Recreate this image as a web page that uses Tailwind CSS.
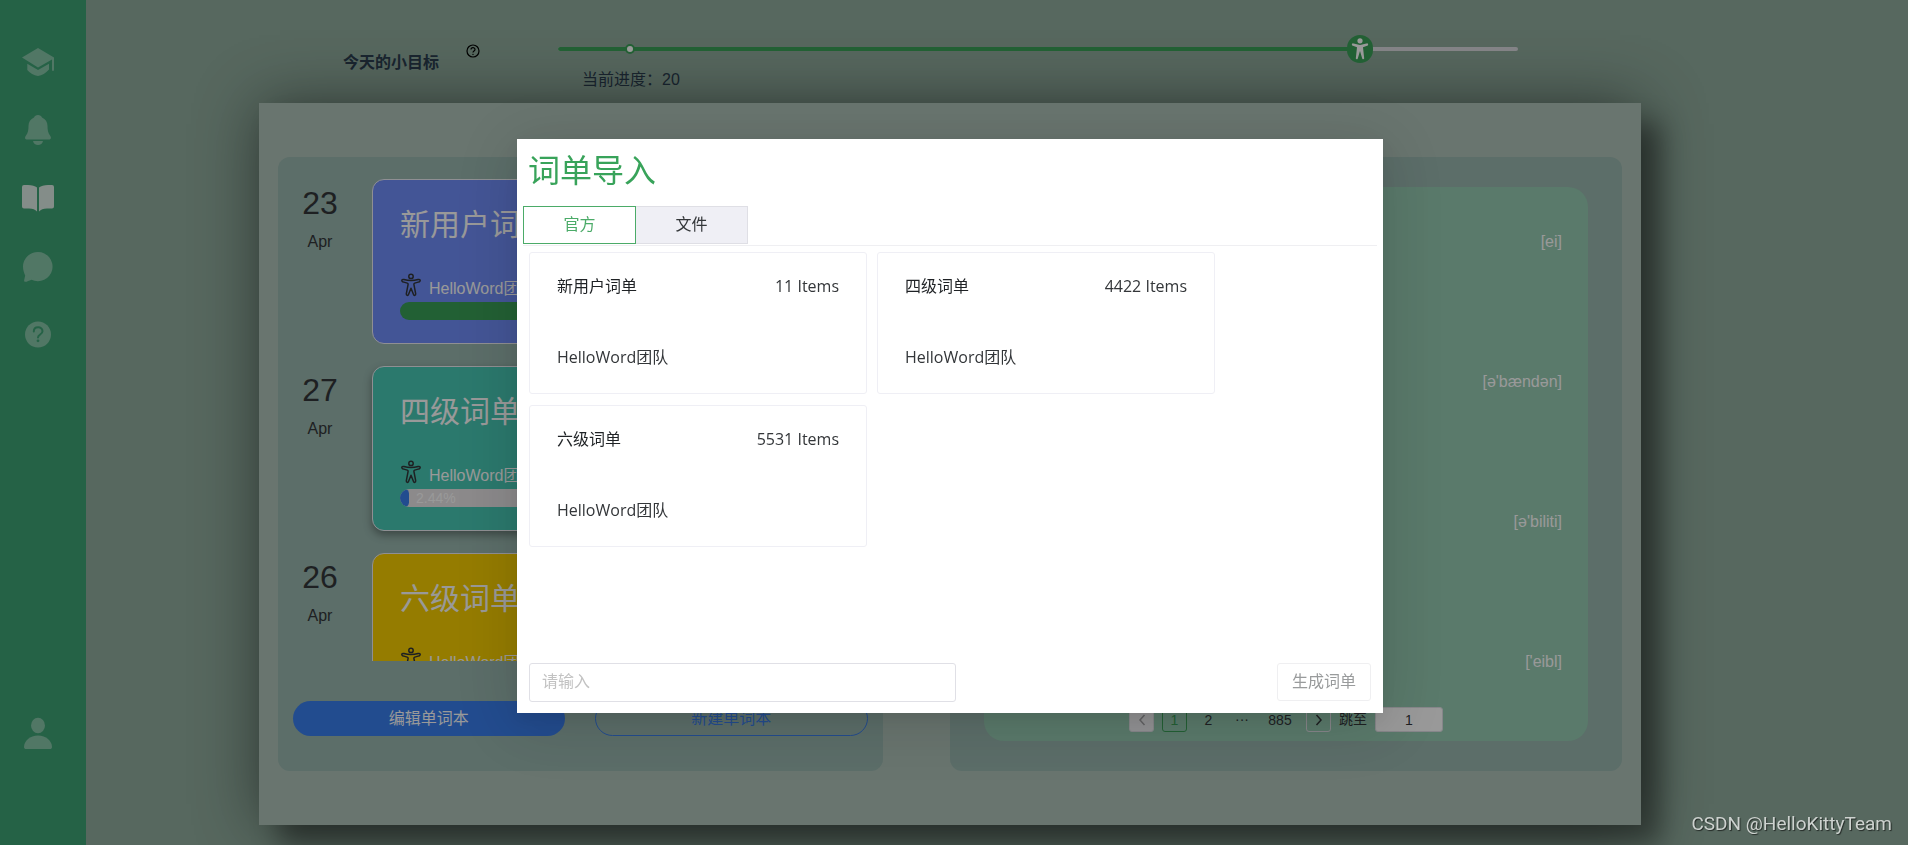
<!DOCTYPE html>
<html lang="zh-CN">
<head>
<meta charset="utf-8">
<meta name="viewport" content="width=device-width, initial-scale=1">
<title>HelloWord</title>
<script src="https://cdn.jsdelivr.net/npm/@tailwindcss/browser@4"></script>
</head>
<body class="h-screen overflow-hidden bg-[#91ad9e] text-base text-[#333639] font-['Liberation_Sans','Noto_Sans_CJK_SC',sans-serif]">
<svg class="hidden" aria-hidden="true">
  <symbol id="person" viewBox="0 0 22 24">
    <g fill="none" stroke="currentColor" stroke-width="1.5" stroke-linejoin="round" stroke-linecap="round">
      <circle cx="11" cy="3.4" r="2.2"/>
      <path d="M2.3 6.6C1.4 7.3 1.8 8.600 3 8.900L7.300 10.100C7.900 10.300 8.200 10.700 8.100 11.300L6.300 20.900C6.200 22.500 8 22.900 8.500 21.600L11 15.200L13.500 21.600C14 22.900 15.800 22.500 15.700 20.900L13.900 11.300C13.800 10.700 14.100 10.300 14.700 10.100L19 8.900C20.200 8.600 20.600 7.300 19.700 6.600C19.200 6.300 18.700 6.400 18.100 6.500C13.400 7.900 8.600 7.900 3.900 6.500C3.300 6.400 2.800 6.300 2.300 6.600Z"/>
    </g>
  </symbol>
</svg>

<div class="flex h-full">
  <nav class="flex w-[86px] shrink-0 flex-col bg-[#3fa375] pl-[18px] pt-[42px] text-[#87c6a9]">
    <div class="flex flex-col gap-7">
      <a href="#" aria-label="学习" class="block size-10"><svg viewBox="0 0 40 40" class="size-10" fill="currentColor"><path d="M20 6 36 15.500V27.500Q36 29 35 29T34 27.500V17.500L20 25.500 4 15.500Z"/><path d="M9.300 21.800 20 28 31 21.800V27.500Q26 33 20 34 13.500 33 9.300 28Z"/></svg></a>
      <a href="#" aria-label="通知" class="block size-10"><svg viewBox="0 0 40 40" class="size-10" fill="currentColor"><path d="M20 5C22 5 23.500 6 24 7.500 27.500 9 29.500 12 29.500 16 29.500 20 30 23 32 25.500 34 28 32.500 29.600 31 29.600H9C7.500 29.600 6 28 8 25.500 10 23 10.500 20 10.500 16 10.500 12 12.500 9 16 7.500 16.500 6 18 5 20 5ZM15 31H25C24.500 33.500 22.500 35 20 35S15.500 33.500 15 31Z"/></svg></a>
      <a href="#" aria-label="单词本" class="block size-10 text-[#ddebe4]"><svg viewBox="0 0 40 40" class="size-10" fill="currentColor"><path d="M6 7H10C14 7 17 8 19 9.500V33.500C17 31.500 15 30.500 11 30.500H6Q4 30.500 4 28.500V9Q4 7 6 7ZM34 7H30C26 7 23 8 21 9.500V33.500C23 31.500 25 30.500 29 30.500H34Q36 30.500 36 28.500V9Q36 7 34 7Z"/></svg></a>
      <a href="#" aria-label="消息" class="block size-10"><svg viewBox="0 0 40 40" class="size-10" fill="currentColor"><path d="M20 6A14.600 14.600 0 1 1 13.500 33.700C11 34.500 9 35.800 7.300 35.800 6 35.800 6 34.500 6.300 33.500L7.200 29.500C6 27 5 24 5 20.600A15 14.600 0 0 1 20 6Z"/></svg></a>
      <a href="#" aria-label="帮助" class="block size-10"><svg viewBox="0 0 40 40" class="size-10"><circle cx="20" cy="20.500" r="13" fill="currentColor"/><path d="M15.800 17.500C15.800 12 24.500 12 24.500 17.200 24.500 20.500 20 20.500 20 23.500" fill="none" stroke="#3fa375" stroke-width="2" stroke-linecap="round"/><circle cx="20" cy="26.800" r="1.400" fill="#3fa375"/></svg></a>
    </div>
    <a href="#" aria-label="用户" class="mb-[92px] mt-auto block size-10"><svg viewBox="0 0 40 40" class="size-10" fill="currentColor"><ellipse cx="20" cy="12.500" rx="7" ry="7.700"/><path d="M20 22.500C28 22.500 34 28 34 34 34 35.500 33 36 32 36H8C7 36 6 35.500 6 34 6 28 12 22.500 20 22.500Z"/></svg></a>
  </nav>

  <main class="flex min-w-0 flex-1 flex-col">
    <header class="flex h-[103px] shrink-0 items-start pl-[257px] pr-[390px] text-[#2c3e50]">
      <label for="goal" class="mt-[51px] w-24 font-bold leading-6">今天的小目标</label>
      <button aria-label="说明" class="ml-[27px] mt-[44px] text-black"><svg viewBox="0 0 14 14" class="block size-[14px]" fill="none" stroke="currentColor"><circle cx="7" cy="7" r="6" stroke-width="1.200"/><path d="M5 5.600C5 3 9 3 9 5.500 9 7 7 7 7 8.600" stroke-width="1.200"/><circle cx="7" cy="10.300" r=".4" fill="currentColor" stroke-width=".6"/></svg></button>
      <div class="ml-[78px] mt-[35px] flex-1">
        <div class="relative flex h-7 items-center">
          <div class="h-1 w-full overflow-hidden rounded-full bg-[#dbdbdf]"><div class="h-full bg-[#3aa057]" style="width:83.5%"></div></div>
          <span class="absolute size-[10px] -translate-x-1/2 rounded-full border-2 border-[#3aa057] bg-white" style="left:7.5%"></span>
          <span class="absolute flex h-7 w-[26px] -translate-x-1/2 items-center justify-center rounded-full bg-[#3aa057] text-white" style="left:83.5%"><svg viewBox="0 0 18 24" class="h-6 w-[18px]" fill="currentColor"><circle cx="9" cy="3.800" r="2.600"/><path d="M1.500 6.300 9 8 16.500 6.300Q17.800 7.500 16.800 8.600L12 10.300 13.200 21.500Q12.500 23 11.300 21.800L9 14 6.700 21.800Q5.500 23 4.800 21.500L6 10.300 1.200 8.600Q.2 7.500 1.500 6.300Z"/></svg></span>
          <input id="goal" type="range" min="0" max="24" value="20" class="absolute inset-0 w-full opacity-0">
        </div>
        <p class="mt-[5px] pl-6 leading-6">当前进度：20</p>
      </div>
    </header>

    <section class="mb-5 ml-[173px] mr-[267px] grid min-h-0 flex-1 grid-cols-[605fr_672fr] gap-[67px] bg-[#afc3b9] px-[19px] py-[54px] shadow-[20px_20px_25px_rgba(0,0,0,0.38),0_0_60px_rgba(0,0,0,0.45)]">
      <div class="flex min-h-0 flex-col rounded-xl bg-[#99b7af]">
        <div class="flex min-h-0 flex-1 flex-col gap-[22px] overflow-hidden pr-[22px] pt-[22px]">
          <article class="flex shrink-0 gap-[10px]">
            <div class="w-[84px] pt-1 text-center"><p class="text-[32px] leading-10">23</p><p class="mt-[7px] leading-6">Apr</p></div>
            <div class="flex-1 rounded-xl border border-[#efeff5] bg-[#718efa] px-[27px] pb-[23px] pt-[27px] text-white">
              <h2 class="text-[30px] leading-9">新用户词单</h2>
              <div class="mt-[30px] flex h-7 items-end gap-[7px]"><svg class="h-6 w-[22px] self-start text-[#333639]"><use href="#person"/></svg><span class="leading-6">HelloWord团队</span></div>
              <div class="mt-px h-[18px] rounded-full bg-[#3aa057]"></div>
            </div>
          </article>
          <article class="flex shrink-0 gap-[10px]">
            <div class="w-[84px] pt-1 text-center"><p class="text-[32px] leading-10">27</p><p class="mt-[7px] leading-6">Apr</p></div>
            <div class="flex-1 rounded-xl border border-[#efeff5] bg-[#48cab6] px-[27px] pb-[23px] pt-[27px] text-white shadow-[0_4px_8px_rgba(0,0,0,0.35)]">
              <h2 class="text-[30px] leading-9">四级词单</h2>
              <div class="mt-[30px] flex h-7 items-end gap-[7px]"><svg class="h-6 w-[22px] self-start text-[#333639]"><use href="#person"/></svg><span class="leading-6">HelloWord团队</span></div>
              <div class="mt-px flex h-[18px] overflow-hidden rounded-full bg-[#e9e6e8]"><div class="h-full rounded-full bg-[#3a7fee]" style="width:2.1%"></div><span class="pl-[7px] text-sm leading-[18px] text-white">2.44%</span></div>
            </div>
          </article>
          <article class="flex shrink-0 gap-[10px]">
            <div class="w-[84px] pt-1 text-center"><p class="text-[32px] leading-10">26</p><p class="mt-[7px] leading-6">Apr</p></div>
            <div class="flex-1 rounded-xl border border-[#efeff5] bg-[#f8cf00] px-[27px] pb-[23px] pt-[27px] text-white">
              <h2 class="text-[30px] leading-9">六级词单</h2>
              <div class="mt-[30px] flex h-7 items-end gap-[7px]"><svg class="h-6 w-[22px] self-start text-[#333639]"><use href="#person"/></svg><span class="leading-6">HelloWord团队</span></div>
              <div class="mt-px h-[18px] rounded-full bg-[#e9e6e8]"></div>
            </div>
          </article>
        </div>
        <div class="mb-[35px] mt-10 flex gap-[30px] px-[15px]">
          <button class="h-[35px] flex-1 rounded-full bg-[#3a7fee] text-white">编辑单词本</button>
          <button class="h-[35px] flex-1 rounded-full border border-[#3a7fee] text-[#3a7fee]">新建单词本</button>
        </div>
      </div>

      <div class="flex min-h-0 flex-col rounded-xl bg-[#99b7af] px-[34px] py-[30px]">
        <div class="flex min-h-0 flex-1 flex-col rounded-[20px] bg-[#96cbb2] pb-[9px]">
          <ul class="min-h-0 flex-1 overflow-hidden text-right leading-6 text-white">
            <li class="h-[140px] pr-[26px] pt-[43px]">[ei]</li>
            <li class="h-[140px] pr-[26px] pt-[43px]">[ə'bændən]</li>
            <li class="h-[140px] pr-[26px] pt-[43px]">[ə'biliti]</li>
            <li class="h-[140px] pr-[26px] pt-[43px]">['eibl]</li>
          </ul>
          <div class="flex h-[25px] items-stretch justify-center gap-2 text-sm">
            <button aria-label="上一页" disabled class="flex w-[25px] items-center justify-center rounded-[3px] border border-[#e0e0e6] bg-[#f5f5f8] text-[#a5a5a8]"><svg viewBox="0 0 8 12" class="h-3 w-2" fill="none" stroke="currentColor" stroke-width="1.500"><path d="M6.500 1 2 6l4.500 5"/></svg></button>
            <button class="w-[25px] rounded-[3px] border border-[#3aa057] text-[#3aa057]">1</button>
            <button class="w-[27px]">2</button>
            <span class="w-6 text-center leading-6">···</span>
            <button class="w-9">885</button>
            <button aria-label="下一页" class="flex w-[25px] items-center justify-center rounded-[3px] border border-[#e0e0e6]"><svg viewBox="0 0 8 12" class="h-3 w-2" fill="none" stroke="currentColor" stroke-width="1.500"><path d="M1.500 1 6 6l-4.500 5"/></svg></button>
            <label for="jump" class="leading-6">跳至</label>
            <input id="jump" value="1" class="w-[68px] rounded-[3px] border border-[#e0e0e6] bg-white text-center">
          </div>
        </div>
      </div>
    </section>
  </main>
</div>

<div class="fixed inset-0 flex items-start justify-center bg-black/40 pr-2 pt-[139px]">
  <div role="dialog" aria-labelledby="dialog-title" class="flex h-[574px] w-[866px] flex-col bg-white pb-[11px] pt-[9px] font-['Open_Sans','Noto_Sans_CJK_SC',sans-serif] shadow-[0_6px_16px_rgba(0,0,0,0.08),0_9px_60px_10px_rgba(0,0,0,0.12)]">
    <h1 id="dialog-title" class="px-[11px] text-[32px] leading-[44px] text-[#38a35a]">词单导入</h1>
    <div role="tablist" class="mx-1.5 mt-[14px] flex border-b border-[#efeff2] pb-px">
      <button role="tab" aria-selected="true" class="h-[38px] w-[113px] border border-[#4bab68] pb-0.5 text-[#4bab68]">官方</button>
      <button role="tab" aria-selected="false" class="h-[38px] w-[112px] border border-l-0 border-[#dfdfe5] bg-[#efeff5] pb-0.5">文件</button>
    </div>
    <div class="mx-3 mt-1.5 grid grid-cols-[repeat(auto-fill,338px)] gap-x-[10px] gap-y-[11px] leading-6">
      <article class="flex h-[142px] flex-col justify-between rounded-[3px] border border-[#efeff5] px-[27px] pb-6 pt-[21px]"><div class="flex justify-between"><h2 class="text-[#1f2225]">新用户词单</h2><span>11 Items</span></div><p>HelloWord团队</p></article>
      <article class="flex h-[142px] flex-col justify-between rounded-[3px] border border-[#efeff5] px-[27px] pb-6 pt-[21px]"><div class="flex justify-between"><h2 class="text-[#1f2225]">四级词单</h2><span>4422 Items</span></div><p>HelloWord团队</p></article>
      <article class="flex h-[142px] flex-col justify-between rounded-[3px] border border-[#efeff5] px-[27px] pb-6 pt-[21px]"><div class="flex justify-between"><h2 class="text-[#1f2225]">六级词单</h2><span>5531 Items</span></div><p>HelloWord团队</p></article>
    </div>
    <div class="mt-auto flex items-start justify-between px-3">
      <input aria-label="词单名称" placeholder="请输入" class="h-[39px] w-[427px] rounded-[3px] border border-[#e0e0e6] px-3 pb-1 placeholder:text-[#c2c2c2]">
      <button disabled class="h-[38px] w-[94px] rounded-[3px] border border-[#efeff1] pb-0.5 text-[#999b9c]">生成词单</button>
    </div>
  </div>
</div>
<p class="fixed bottom-[9px] right-4 font-['Roboto',sans-serif] text-[19px] leading-6 text-[#cdd2cf] [text-shadow:1px_1px_1px_rgba(0,0,0,0.6)]">CSDN @HelloKittyTeam</p>
</body>
</html>
